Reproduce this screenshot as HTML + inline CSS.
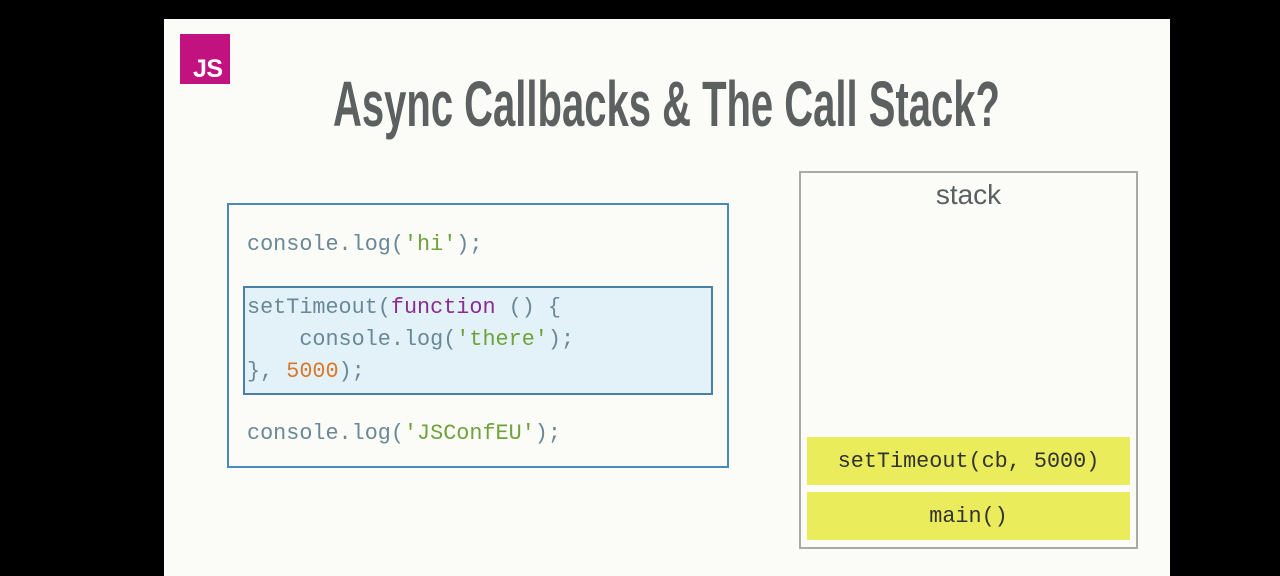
<!DOCTYPE html>
<html><head><style>
body{margin:0;width:1280px;height:576px;background:#000;position:relative;overflow:hidden;font-family:"Liberation Sans",sans-serif}
.slide{position:absolute;left:164px;top:19px;width:1006px;height:557px;background:#fbfcf8}
.logo{position:absolute;left:180px;top:34px;width:50px;height:50px;background:#c2127f;color:#fff;font-weight:bold;font-size:25px;box-sizing:border-box;padding:22px 0 0 13px;line-height:26px;letter-spacing:-0.5px}
.title{position:absolute;left:333px;top:69px;font-weight:bold;font-size:64px;color:#5d6060;white-space:nowrap;transform-origin:0 0;transform:scaleX(0.625);line-height:70px}
.code{position:absolute;left:227px;top:203px;width:502px;height:265px;border:2px solid #4a8ab8;box-sizing:border-box}
.mono{font-family:"Liberation Mono",monospace;font-size:21.8px;color:#6a8896;position:absolute;white-space:pre;line-height:32px}
.hl{position:absolute;left:243px;top:286px;width:470px;height:109px;border:2px solid #4a80a8;background:#e3f2f9;box-sizing:border-box}
.s{color:#6ea23a}.k{color:#8a2d8e}.n{color:#d8782e}
.stack{position:absolute;left:799px;top:171px;width:339px;height:378px;border:2px solid #a9aaa8;box-sizing:border-box}
.st{position:absolute;left:0;right:0;top:6px;text-align:center;font-size:28px;color:#5a5f60}
.y{position:absolute;left:807px;width:323px;height:48px;background:#ebec5c;font-family:"Liberation Mono",monospace;font-size:21.8px;color:#333;text-align:center;line-height:50px}
</style></head><body>
<div class="slide"></div>
<div class="logo">JS</div>
<div class="title">Async Callbacks &amp; The Call Stack?</div>
<div class="code"></div>
<div class="hl"></div>
<div class="mono" style="left:247px;top:229px">console.log(<span class="s">'hi'</span>);</div>
<div class="mono" style="left:247px;top:292px">setTimeout(<span class="k">function</span> () {
    console.log(<span class="s">'there'</span>);
}, <span class="n">5000</span>);</div>
<div class="mono" style="left:247px;top:418px">console.log(<span class="s">'JSConfEU'</span>);</div>
<div class="stack"><div class="st">stack</div></div>
<div class="y" style="top:437px">setTimeout(cb, 5000)</div>
<div class="y" style="top:492px">main()</div>
</body></html>
